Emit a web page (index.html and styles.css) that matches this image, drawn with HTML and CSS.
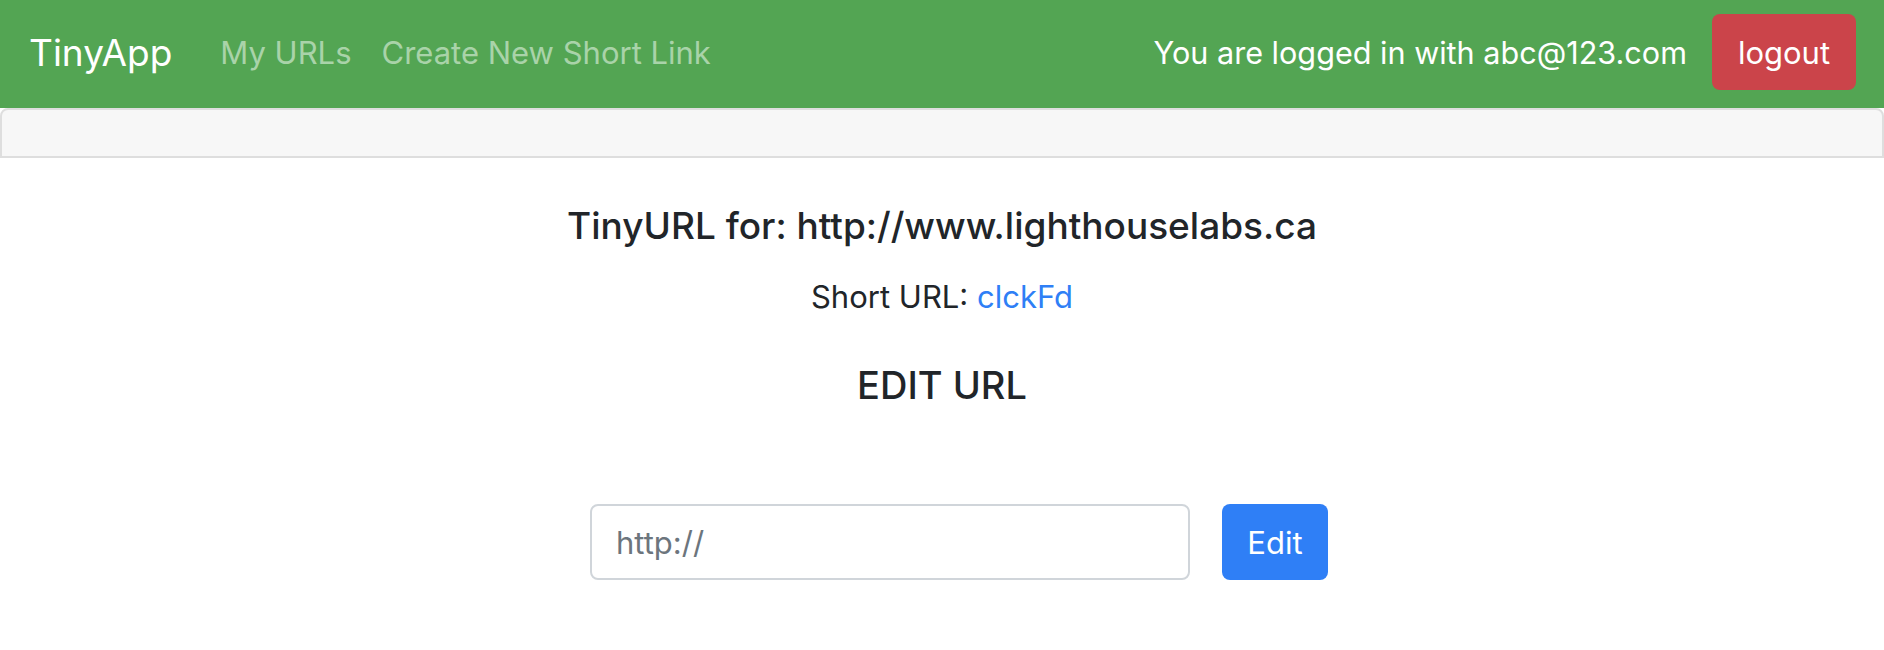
FILE: index.html
```html
<!DOCTYPE html>
<html>
<head>
<meta charset="utf-8">
<title>TinyApp</title>
<link rel="stylesheet" href="styles.css">
</head>
<body>
<nav class="navbar">
  <a class="brand" href="#">TinyApp</a>
  <div class="nav-links">
    <a class="nav-link" href="#">My URLs</a>
    <a class="nav-link" href="#">Create New Short Link</a>
  </div>
  <div class="nav-right">
    <span class="login-text">You are logged in with abc@123.com</span>
    <button class="btn btn-danger">logout</button>
  </div>
</nav>
<div class="card-header"></div>
<main class="content">
  <h3 class="title">TinyURL for: http://www.lighthouselabs.ca</h3>
  <p class="short">Short URL: <a class="short-link" href="#">clckFd</a></p>
  <h3 class="subtitle">EDIT URL</h3>
  <form class="edit-form">
    <input class="form-control" type="text" placeholder="http://">
    <button class="btn btn-primary" type="button">Edit</button>
  </form>
</main>
</body>
</html>
```

FILE: styles.css
```css
* { box-sizing: border-box; }
body {
  margin: 0;
  font-family: Inter, "Liberation Sans", sans-serif;
  color: #212529;
  background: #ffffff;
}
.navbar {
  display: flex;
  align-items: center;
  height: 108px;
  padding: 0 28px 4px 29px;
  background: #53a553;
}
.brand {
  color: #ffffff;
  text-decoration: none;
  font-size: 37px;
  margin-right: 48px;
}
.nav-links {
  display: flex;
  gap: 30px;
}
.nav-link {
  color: #a9d3a9;
  text-decoration: none;
  font-size: 31px;
}
.nav-right {
  margin-left: auto;
  display: flex;
  align-items: center;
  gap: 25px;
}
.login-text {
  color: #ffffff;
  font-size: 30.6px;
}
.btn {
  border: none;
  border-radius: 8px;
  color: #ffffff;
  font-family: inherit;
  font-size: 31px;
  height: 76px;
  cursor: pointer;
}
.btn-danger {
  background: #cb444a;
  width: 144px;
}
.btn-primary {
  background: #2f7ff6;
  width: 106px;
}
.card-header {
  height: 50px;
  background: #f7f7f7;
  border: 2px solid #dedede;
  border-radius: 8px 8px 0 0;
}
.content {
  text-align: center;
  padding-top: 40px;
}
.title {
  margin: 0;
  font-size: 37px;
  font-weight: 500;
  line-height: 56px;
}
.short {
  margin: 20px 0 0;
  font-size: 31px;
  line-height: 46px;
}
.short-link {
  color: #2f7ff6;
  text-decoration: none;
}
.subtitle {
  margin: 37px 0 0;
  font-size: 38px;
  font-weight: 500;
  line-height: 56px;
}
.edit-form {
  display: flex;
  justify-content: center;
  gap: 32px;
  margin-top: 91px;
  padding-left: 34px;
}
.form-control {
  width: 600px;
  height: 76px;
  border: 2px solid #d0d5da;
  border-radius: 8px;
  padding: 0 24px;
  font-family: inherit;
  font-size: 31px;
  color: #495057;
}
.form-control::placeholder {
  color: #6c757d;
}
```
